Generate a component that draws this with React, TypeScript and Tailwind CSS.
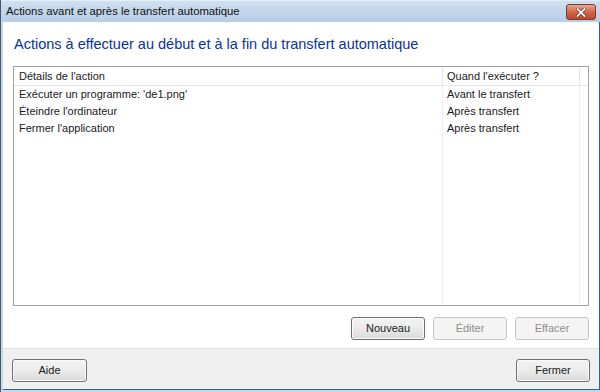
import React from "react";

const font = "font-['Liberation_Sans','Arial',sans-serif]";

function Btn({ label, disabled, w = "w-[74px]" }: { label: string; disabled?: boolean; w?: string }) {
  return (
    <div
      className={
        "h-[23px] " +
        w +
        " rounded-[3px] border flex items-center justify-center text-[11px] " +
        (disabled
          ? "border-[#c3c6c9] bg-[#f4f4f4] text-[#8d8d8d]"
          : "border-[#707070] bg-gradient-to-b from-[#f3f3f3] via-[#ebebeb] to-[#d9d9d9] text-[#1a1a1a] shadow-[inset_0_0_0_1px_#fbfbfb]")
      }
    >
      {label}
    </div>
  );
}

const rows = [
  ["Exécuter un programme: 'de1.png'", "Avant le transfert"],
  ["Éteindre l'ordinateur", "Après transfert"],
  ["Fermer l'application", "Après transfert"],
];

export default function App() {
  return (
    <div className={"w-[600px] h-[392px] flex flex-col bg-[#c4d8ec] border-l border-[#4e5864] " + font}>
      {/* title bar */}
      <div className="h-[22px] flex items-center pl-[5px] pr-[4px] bg-gradient-to-b from-[#cfe0f1] to-[#b7cde5] border-t border-[#e4eef8]">
        <span className="text-[11.3px] text-[#111] leading-none">Actions avant et après le transfert automatique</span>
        <div className="ml-auto mt-[1px] w-[30px] h-[16px] rounded-[3px] border border-[#7b3a2c] bg-gradient-to-b from-[#e9a593] via-[#d2644b] to-[#c2452c] flex items-center justify-center">
          <svg width="10" height="9" viewBox="0 0 10 9">
            <path d="M1.5 1 L8.5 8 M8.5 1 L1.5 8" stroke="#5b1c10" strokeWidth="3" strokeLinecap="square" />
            <path d="M1.5 1 L8.5 8 M8.5 1 L1.5 8" stroke="#ffffff" strokeWidth="1.8" strokeLinecap="square" />
          </svg>
        </div>
      </div>
      {/* body */}
      <div className="flex-1 flex pl-[2px] pb-[2px]">
        <div className="flex-1 flex flex-col border-r border-b border-[#1f6b8c]">
          <div className="flex-1 bg-white flex flex-col px-[10px]">
            <div className="pl-[1px] mt-[12px] h-[20px] text-[14.5px] leading-[20px] text-[#0a3399]">
              Actions à effectuer au début et à la fin du transfert automatique
            </div>
            <div className="mt-[12px] h-[240px] border border-[#a0a4a8] flex flex-col relative">
              <div className="h-[19px] flex border-b border-[#e3e6e9] text-[11px] text-[#1a1a1a]">
                <div className="w-[429px] pl-[5px] flex items-center border-r border-[#e3e6e9]">Détails de l'action</div>
                <div className="w-[137px] pl-[4px] flex items-center border-r border-[#e3e6e9]">Quand l'exécuter ?</div>
              </div>
              <div className="flex-1 flex">
                <div className="w-[429px] border-r border-[#eef0f2] flex flex-col">
                  {rows.map((r) => (
                    <div key={r[0]} className="h-[17px] pl-[5px] flex items-center text-[11px] text-[#1a1a1a]">
                      {r[0]}
                    </div>
                  ))}
                </div>
                <div className="w-[137px] border-r border-[#eef0f2] flex flex-col">
                  {rows.map((r, i) => (
                    <div key={i} className="h-[17px] pl-[4px] flex items-center text-[11px] text-[#1a1a1a]">
                      {r[1]}
                    </div>
                  ))}
                </div>
              </div>
            </div>
            <div className="mt-[11px] flex justify-end gap-[8px]">
              <Btn label="Nouveau" />
              <Btn label="Éditer" disabled />
              <Btn label="Effacer" disabled />
            </div>
          </div>
          <div className="h-[41px] bg-[#f0f0f0] border-t border-[#dfdfdf] flex items-start pt-[10px] pl-[9px] pr-[9px] justify-between">
            <Btn label="Aide" w="w-[75px]" />
            <Btn label="Fermer" />
          </div>
        </div>
      </div>
    </div>
  );
}
